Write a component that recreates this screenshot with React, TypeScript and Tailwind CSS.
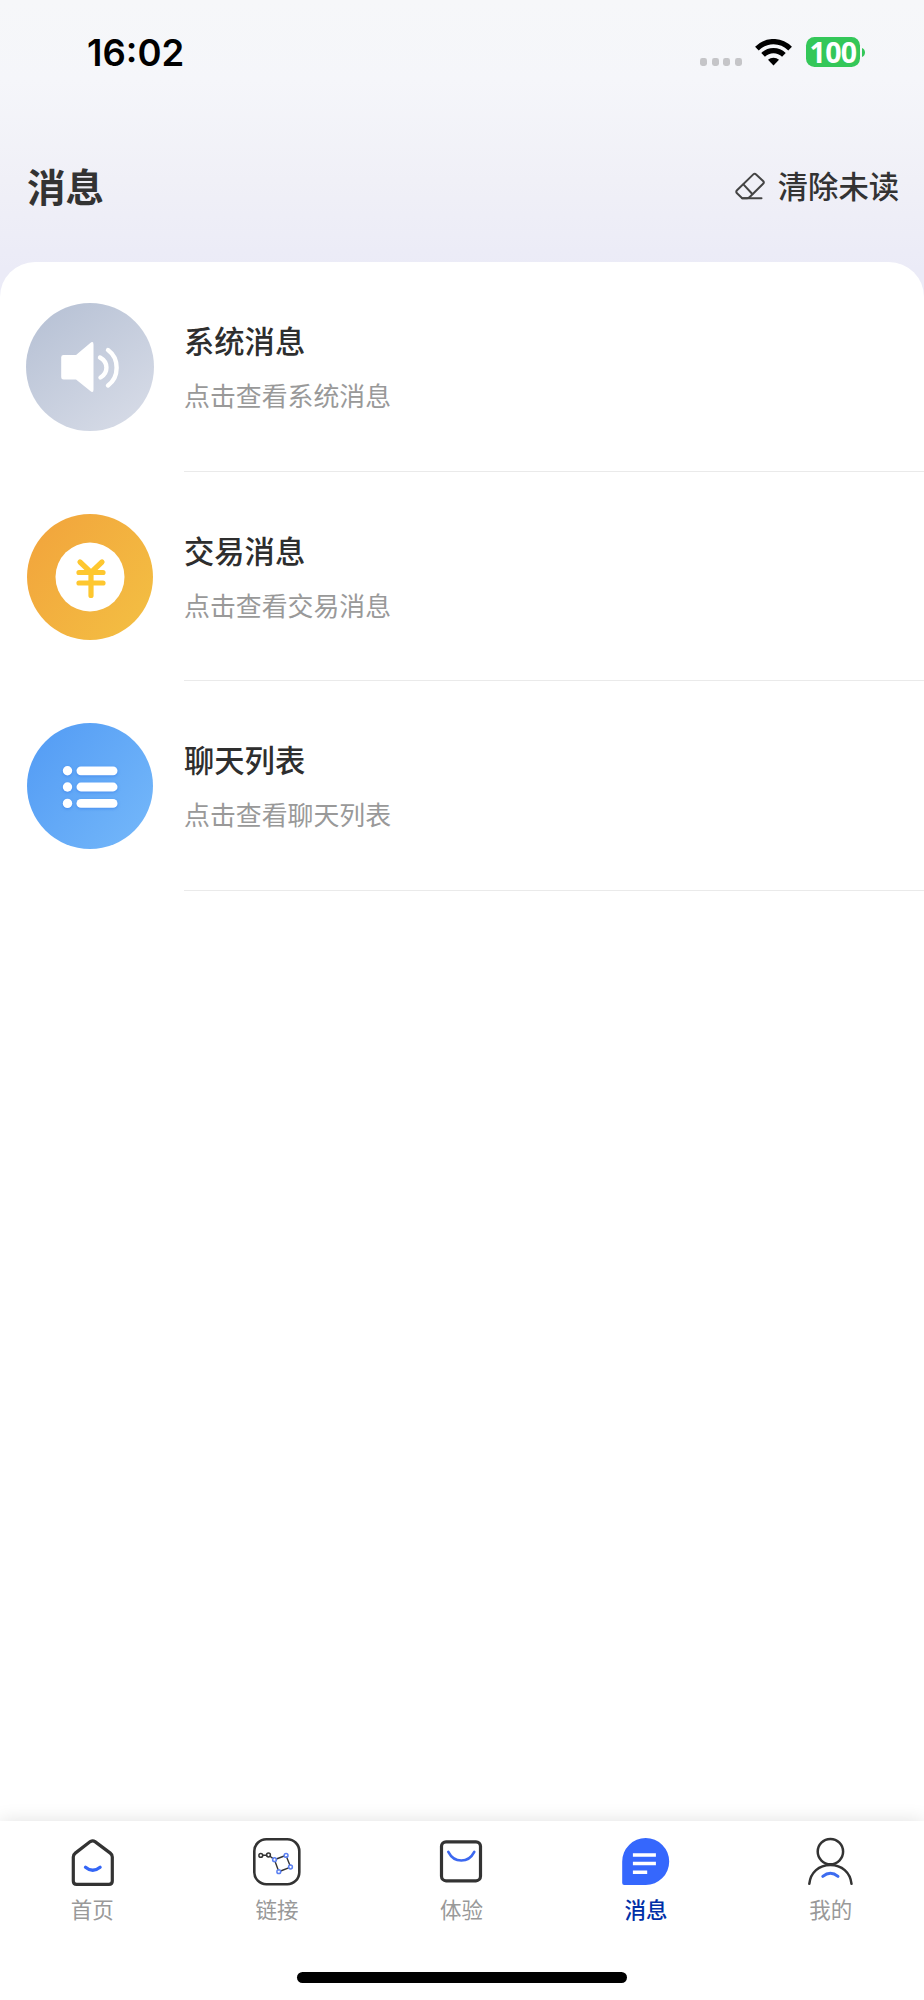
import type { ReactNode } from 'react';

const cjk = "font-['Noto_Sans_CJK_SC',sans-serif]";

function StatusBar() {
  return (
    <div className="flex h-[104px] items-center justify-between pr-[59px] pl-[87px]">
      <div className="pt-[2px] font-['Inter',sans-serif] text-[36.5px] leading-none font-semibold text-black">16:02</div>
      <div className="flex items-center">
        <div className="mt-5 flex gap-[4.3px]">
          {[0, 1, 2, 3].map((i) => (
            <span key={i} className="size-[7.3px] rounded-[2.4px] bg-[#c5c5c8]" />
          ))}
        </div>
        <svg className="ml-[13px] h-[27px] w-[37px]" viewBox="0 0 37 27" fill="none" stroke="#000">
          <path d="M1.9 9.6C11.4.2 25.6.2 35.1 9.6" strokeWidth="5.2" />
          <path d="M8.1 15.9c5.8-5.7 15-5.7 20.8 0" strokeWidth="5.2" />
          <path d="M18.5 26.4 13 20.8c3-2.9 8-2.9 11 0z" fill="#000" stroke="none" />
        </svg>
        <div className="ml-[14px] flex h-[30px] w-[54px] items-center justify-center rounded-[8.5px] bg-[#34c759] font-['Open_Sans',sans-serif] text-[28.5px] leading-none font-bold tracking-[-0.6px] text-white">
          100
        </div>
        <svg className="ml-[2px] h-[9px] w-[3px]" viewBox="0 0 3 9">
          <path d="M0 0C4 1.6 4 7.4 0 9z" fill="#34c759" />
        </svg>
      </div>
    </div>
  );
}

function Header() {
  return (
    <header className="flex h-[158px] items-center justify-between pt-[5px] pr-[25px] pl-[27px] text-[#333]">
      <h1 className="text-[38.5px] leading-none font-bold">消息</h1>
      <button className="flex items-center text-[30.3px] leading-none font-medium">
        <svg
          className="mt-px mr-[13px] h-[28px] w-[30px]"
          viewBox="0 0 30 28"
          fill="none"
          stroke="#444"
          strokeWidth="2"
          strokeLinecap="round"
          strokeLinejoin="round"
        >
          <path d="M7.2 26.3 2 21.2q-1.5-1.5 0-3L18.3 2.4q1.4-1.3 2.8 0l7 6.6q1.4 1.4 0 2.8L14.5 25.2q-1.1 1.1-2.6 1.1z" />
          <path d="M8.4 12.4 17.3 22M7.2 26.3h19.3" />
        </svg>
        清除未读
      </button>
    </header>
  );
}

function SystemIcon() {
  return (
    <svg className="size-32" viewBox="0 0 128 128">
      <defs>
        <linearGradient id="sys" x1="0.15" y1="0.1" x2="0.8" y2="0.95">
          <stop offset="0" stopColor="#b9c3d6" />
          <stop offset="1" stopColor="#d5dae6" />
        </linearGradient>
      </defs>
      <circle cx="64" cy="64" r="64" fill="url(#sys)" />
      <path
        d="M37.5 52H50L64 40.2q3.5-2.7 3.5 1.2v45.4q0 3.8-3.5 1L50 76.5H37.5q-2.3 0-2.3-2.3V54.3q0-2.3 2.3-2.3z"
        fill="#fff"
      />
      <g fill="none" stroke="#fff" strokeWidth="4.4" strokeLinecap="round">
        <path d="M74 54.500c8.500 4.800 8.500 15 .5 20" />
        <path d="M82 47c11.500 8.500 11.500 27 0 35.500" />
      </g>
    </svg>
  );
}

function TradeIcon() {
  return (
    <svg className="size-32" viewBox="0 0 128 128">
      <defs>
        <linearGradient id="trade" x1="0.1" y1="0.2" x2="0.9" y2="0.8">
          <stop offset="0" stopColor="#f2a73d" />
          <stop offset="1" stopColor="#f3bc42" />
        </linearGradient>
      </defs>
      <circle cx="64" cy="64" r="63" fill="url(#trade)" />
      <circle cx="64" cy="64" r="34.500" fill="#fff" />
      <path
        d="M54 49l11 10.500L76 49M65 59.500V82.500M53 59.500h24M53 70h24"
        fill="none"
        stroke="#fec72f"
        strokeWidth="5.200"
        strokeLinecap="round"
        strokeLinejoin="round"
      />
    </svg>
  );
}

function ListIcon() {
  return (
    <svg className="size-32" viewBox="0 0 128 128">
      <defs>
        <linearGradient id="list" x1="0.1" y1="0.2" x2="0.9" y2="0.8">
          <stop offset="0" stopColor="#579ff5" />
          <stop offset="1" stopColor="#70b4f9" />
        </linearGradient>
      </defs>
      <circle cx="64" cy="64" r="63" fill="url(#list)" />
      <g fill="#fff" className="drop-shadow-[0_1.5px_1.5px_rgba(40,110,230,0.5)]">
        {[48.8, 65, 81.4].map((y) => (
          <g key={y}>
            <circle cx="41.500" cy={y} r="4.700" />
            <rect x="50.500" y={y - 4.4} width="41" height="8.800" rx="4.400" />
          </g>
        ))}
      </g>
    </svg>
  );
}

function MessageRow({ icon, title, text }: { icon: ReactNode; title: string; text: string }) {
  return (
    <li className="flex h-[209.5px] pl-[26px]">
      <div className="pt-[41px]">{icon}</div>
      <div className="ml-[30px] flex flex-1 flex-col border-b border-[#eaeaea] pt-[63px]">
        <h2 className="text-[30.3px] leading-[30px] font-medium text-[#2e2e2e]">{title}</h2>
        <p className="mt-[27px] text-[25.9px] leading-[26px] text-[#999]">{text}</p>
      </div>
    </li>
  );
}

function HomeTab() {
  return (
    <>
      <path d="M22.300 4.600q2.400-1.500 4.700 0l15.300 11.500q2 1.500 2 4V44q0 3.400-3.400 3.400h-32.200q-3.400 0-3.400-3.400V20.100q0-2.500 2-4z" strokeWidth="3.200" />
      <path d="M17.500 30.300q7.200 6 14.600 0" stroke="#3466f6" strokeWidth="3.300" />
    </>
  );
}

function LinkTab() {
  return (
    <>
      <rect x="1.300" y="2.200" width="45" height="45" rx="12" strokeWidth="2.600" />
      <path d="M9.700 18.300h3.900M17 19.300l3.100 2.300M23.300 22l8-3M33.700 20.200l3.200 8M35.600 30.800l-8 3.200M25.100 32.800l-3-8.200" strokeWidth="1.400" />
      <g strokeWidth="1.500">
        <circle cx="7.800" cy="18.400" r="1.900" />
        <circle cx="15.500" cy="18" r="1.900" />
      </g>
      <g stroke="#5b80f2" strokeWidth="1.500">
        <circle cx="21.500" cy="22.700" r="1.900" />
        <circle cx="33.100" cy="18.400" r="1.900" />
        <circle cx="37.500" cy="30" r="1.900" />
        <circle cx="25.800" cy="34.700" r="1.900" />
      </g>
    </>
  );
}

function TryTab() {
  return (
    <>
      <rect x="4.500" y="4.800" width="39" height="39" rx="4.500" strokeWidth="3.200" />
      <path d="M11.300 14.800c6 11.600 20 11.600 26 0" stroke="#3c68f0" strokeWidth="2.600" />
    </>
  );
}

function ChatTab() {
  return (
    <>
      <path d="M23.700 1a23.500 23.500 0 0 1 0 47H2.200q-2 0-2-2V24.500A23.500 23.500 0 0 1 23.700 1z" fill="#3567fd" stroke="none" />
      <path d="M10.900 18.100h23M10.900 26.600h23M10.900 35.300h14.300" stroke="#fff" strokeWidth="3.500" strokeLinecap="butt" />
    </>
  );
}

function MineTab() {
  return (
    <>
      <circle cx="23.400" cy="14.600" r="12.700" strokeWidth="2.500" />
      <path d="M2.300 46.800c1.200-11.300 9.700-18.900 21.100-18.900s19.900 7.600 21.100 18.900" strokeWidth="2.500" />
      <path d="M15.800 39.300q7.600-6.200 15.200 0" stroke="#3d6cf0" strokeWidth="3" />
    </>
  );
}

const tabs = [
  { label: '首页', icon: <HomeTab /> },
  { label: '链接', icon: <LinkTab /> },
  { label: '体验', icon: <TryTab /> },
  { label: '消息', icon: <ChatTab />, active: true },
  { label: '我的', icon: <MineTab /> },
];

function TabBar() {
  return (
    <nav className="flex h-[179px] flex-col items-center justify-between bg-white pt-4 pb-[17px] shadow-[0_0_18px_rgba(0,0,0,0.12)]">
      <div className="grid w-full grid-cols-5 pr-[1px]">
        {tabs.map((tab) => (
          <div key={tab.label} className="flex flex-col items-center">
            <svg
              className="h-[50px] w-12"
              viewBox="0 0 48 50"
              fill="none"
              stroke="#333"
              strokeLinecap="round"
              strokeLinejoin="round"
            >
              {tab.icon}
            </svg>
            <span className={`mt-[11px] text-[21.5px] leading-[22px] ${tab.active ? 'font-medium text-[#002fa7]' : 'text-[#999]'}`}>
              {tab.label}
            </span>
          </div>
        ))}
      </div>
      <div className="h-[11px] w-[330px] rounded-full bg-black" />
    </nav>
  );
}

export default function App() {
  return (
    <div className={`flex h-[2000px] w-[924px] flex-col overflow-hidden bg-[linear-gradient(180deg,#f6f7f9_0,#f5f6fa_80px,#f0f0f7_180px,#ebebf7_270px,#ebebf7_310px)] ${cjk}`}>
      <StatusBar />
      <Header />
      <main className="flex-1 rounded-t-[35px] bg-white">
        <ul>
          <MessageRow icon={<SystemIcon />} title="系统消息" text="点击查看系统消息" />
          <MessageRow icon={<TradeIcon />} title="交易消息" text="点击查看交易消息" />
          <MessageRow icon={<ListIcon />} title="聊天列表" text="点击查看聊天列表" />
        </ul>
      </main>
      <TabBar />
    </div>
  );
}
